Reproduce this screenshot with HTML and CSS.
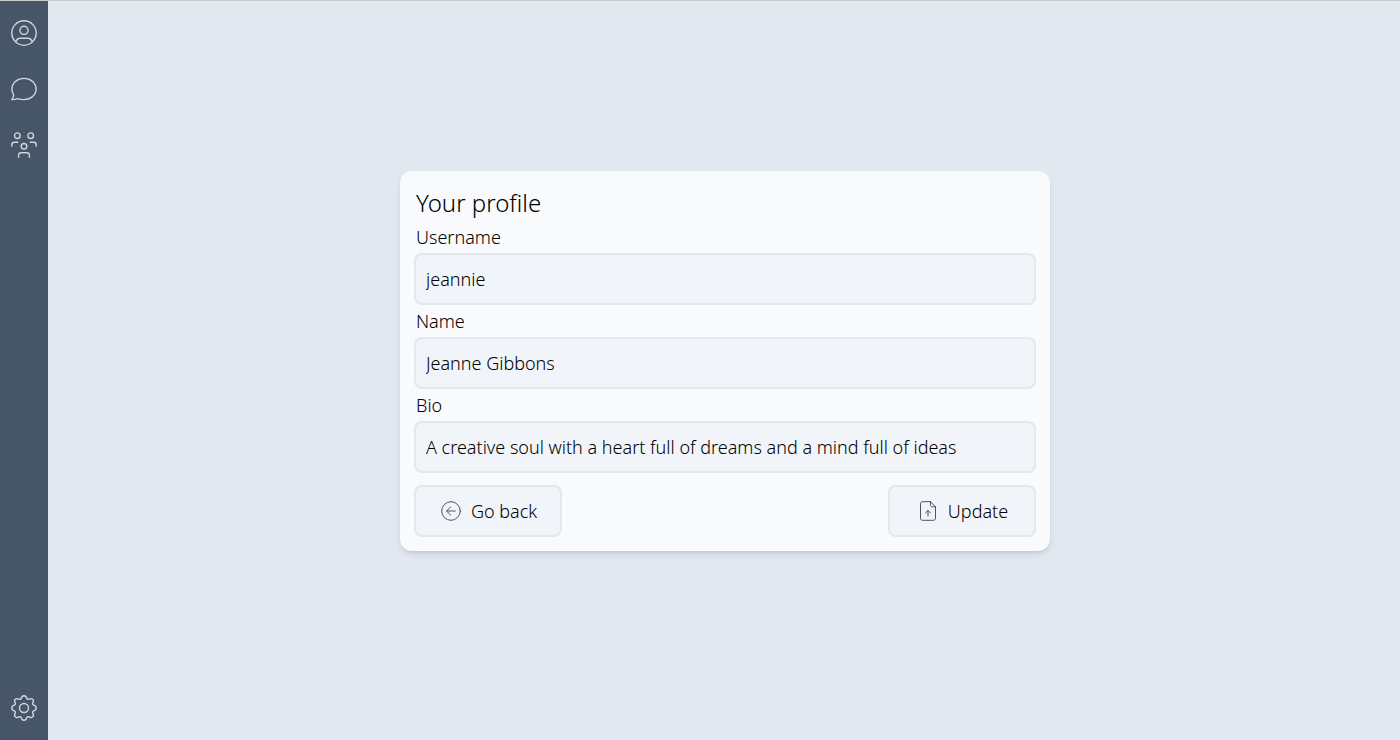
FILE: index.html
```html
<!DOCTYPE html>
<html lang="en">
<head>
<meta charset="utf-8">
<meta name="viewport" content="width=device-width, initial-scale=1">
<title>Your profile</title>
<link rel="stylesheet" href="styles.css">
</head>
<body>
<div class="app">
  <nav class="sidebar" aria-label="Main">
    <a class="nav-link" href="#profile" aria-label="Profile">
      <svg viewBox="0 0 28 28"><circle cx="14" cy="14" r="12.2"/><circle cx="14" cy="11.3" r="4.1"/><path d="M5.8 22.8c.6-2.3 2.2-3.6 4.6-3.6h7.2c2.400 0 4 1.300 4.600 3.600"/></svg>
    </a>
    <a class="nav-link" href="#chats" aria-label="Chats">
      <svg viewBox="0 0 28 28"><path d="M14 3.400C7.200 3.400 1.900 8 1.900 14c0 2.100.6 3.800 1.700 5.300.3 1.800-.7 3.600-1.700 5.300 2 .1 4-.4 5.900-1 2 .7 3.900 1 6.200 1 6.800 0 12.100-4.700 12.100-10.600S20.800 3.400 14 3.400Z"/></svg>
    </a>
    <a class="nav-link" href="#groups" aria-label="Groups">
      <svg viewBox="0 0 28 28"><circle cx="7.300" cy="4.700" r="2.800"/><circle cx="20.700" cy="4.700" r="2.800"/><circle cx="14" cy="15.300" r="2.800"/><path d="M1.800 15v-1.200c0-1.700 1-2.600 2.600-2.600h3.400M26.200 15v-1.200c0-1.700-1-2.600-2.600-2.600h-3.400M8.600 26.200v-1.900c0-1.700 1-2.600 2.600-2.600h5.600c1.600 0 2.600.9 2.600 2.600v1.900"/></svg>
    </a>
    <a class="nav-link nav-link-bottom" href="#settings" aria-label="Settings">
      <svg viewBox="0 0 28 28"><circle cx="14" cy="14" r="4.500"/><path d="M11.200 4.300C11.700 2.600 12.500 1.800 14 1.800s2.300.8 2.800 2.500c.3 1 1.300 1.400 2.200.9 1.600-.8 2.800-.7 3.700.1s1 2.100.1 3.700c-.5.9-.1 1.900.9 2.200 1.700.5 2.500 1.300 2.500 2.800s-.8 2.300-2.500 2.800c-1 .3-1.400 1.300-.9 2.200.9 1.600.8 2.800-.1 3.700s-2.100 1-3.700.1c-.9-.5-1.900-.1-2.200.9-.5 1.700-1.300 2.500-2.800 2.500s-2.300-.8-2.800-2.500c-.3-1-1.300-1.400-2.200-.9-1.600.9-2.800.8-3.700-.1s-1-2.100-.1-3.700c.5-.9.1-1.900-.9-2.200-1.700-.5-2.500-1.300-2.500-2.800s.8-2.300 2.500-2.800c1-.3 1.400-1.300.9-2.200-.9-1.600-.8-2.800.1-3.700s2.100-.9 3.700-.1c.9.5 1.900.1 2.200-.9Z"/></svg>
    </a>
  </nav>
  <main class="content">
    <form class="card">
      <h1 class="title">Your profile</h1>
      <label class="label" for="username">Username</label>
      <input class="field" id="username" type="text" value="jeannie">
      <label class="label" for="name">Name</label>
      <input class="field" id="name" type="text" value="Jeanne Gibbons">
      <label class="label" for="bio">Bio</label>
      <input class="field" id="bio" type="text" value="A creative soul with a heart full of dreams and a mind full of ideas">
      <div class="actions">
        <button class="button" type="button">
          <svg viewBox="0 0 20 20"><circle cx="10" cy="10" r="9.300"/><path d="M14.300 10H5.700M9.600 6 5.600 10l4 4"/></svg>
          Go back
        </button>
        <button class="button" type="button">
          <svg viewBox="0 0 20 20"><path d="M12.500.7H4.600C3.200.7 2.500 1.400 2.500 2.800v14.400c0 1.400.7 2.100 2.100 2.100h10.800c1.400 0 2.100-.7 2.100-2.100V5.800L12.500.7ZM12.500.7v3.200c0 1.300.6 1.900 1.900 1.900h3.100M10 15V9.500M7.500 12 10 9.500l2.500 2.500"/></svg>
          Update
        </button>
      </div>
    </form>
  </main>
</div>
</body>
</html>
```
FILE: styles.css
```css
* {
  box-sizing: border-box;
}

body {
  margin: 0;
  color: #000;
  font: 300 18px/28px "Noto Sans", "Open Sans", sans-serif;
}

.app {
  display: flex;
  min-height: 100vh;
  border-top: 1px solid #c8c9cb;
  background: #e2e8f0;
}

.sidebar {
  display: flex;
  flex: 0 0 48px;
  flex-direction: column;
  align-items: center;
  gap: 28px;
  padding: 18px 0;
  background: #475569;
}

.nav-link {
  display: block;
  height: 28px;
  color: #d1d5db;
}

.nav-link-bottom {
  margin-top: auto;
}

.nav-link svg {
  display: block;
  width: 28px;
  height: 28px;
}

svg {
  fill: none;
  stroke: currentColor;
  stroke-width: 1.4;
  stroke-linecap: round;
  stroke-linejoin: round;
}

.content {
  display: flex;
  flex: 1;
  align-items: center;
  justify-content: center;
  padding: 0 0 19px 2px;
}

.card {
  display: flex;
  flex-direction: column;
  gap: 4px;
  width: 100%;
  max-width: 650px;
  padding: 16px;
  border-radius: 12px;
  background: #f8fafc;
  box-shadow: 0 4px 6px -1px rgb(0 0 0 / 10%), 0 2px 4px -2px rgb(0 0 0 / 10%);
}

.title {
  margin: 0;
  font-size: 24px;
  font-weight: 300;
  line-height: 32px;
}

.field,
.button {
  height: 48px;
  border: 0;
  border-radius: 6px;
  outline: 0;
  background: #f1f5f9;
  box-shadow: 0 0 0 2px #e2e8f0;
  color: inherit;
  font: inherit;
}

.field {
  width: 100%;
  padding: 0 10px;
}

.field:focus-visible,
.button:focus-visible {
  box-shadow: 0 0 0 2px #94a3b8;
}

.actions {
  display: flex;
  justify-content: space-between;
  margin-top: 12px;
}

.button {
  display: flex;
  align-items: center;
  justify-content: center;
  gap: 10px;
  width: 144px;
  padding: 0 0 0 2px;
  cursor: pointer;
}

.button svg {
  width: 20px;
  height: 20px;
  color: #475569;
  stroke-width: 1;
}
```
